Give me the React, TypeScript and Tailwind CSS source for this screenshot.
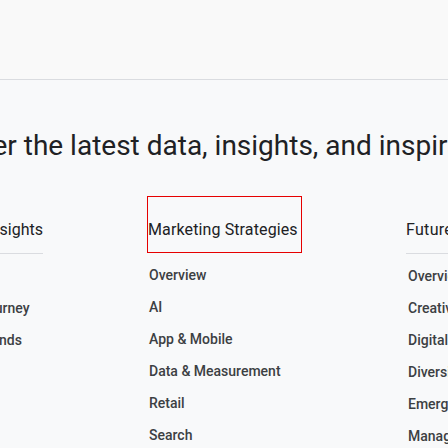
import React from 'react';

const columns = [
  {
    title: 'Consumer Insights',
    items: ['Overview', 'Consumer Journey', 'Consumer Trends'],
  },
  {
    title: 'Marketing Strategies',
    active: true,
    items: ['Overview', 'AI', 'App & Mobile', 'Data & Measurement', 'Retail', 'Search'],
  },
  {
    title: 'Future of Marketing',
    items: ['Overview', 'Creativity', 'Digital Transformation', 'Diversity & Inclusion', 'Emerging Technology', 'Management & Culture'],
  },
];

export default function App() {
  return (
    <div
      className="h-screen w-full overflow-hidden bg-[#f8f9fa] text-[#202124]"
      style={{ fontFamily: 'Roboto, "Liberation Sans", sans-serif' }}
    >
      {/* top bar */}
      <div className="h-[80px] border-b border-[#dadce0] bg-[#f9f9f9]" />

      {/* headline, wider than the viewport */}
      <h1 className="mt-12 -ml-[91px] whitespace-nowrap text-[28px] leading-9 font-normal">
        Discover the latest data, insights, and inspiration
      </h1>

      {/* mega menu columns */}
      <div className="mt-8 flex gap-[104px]">
        {columns.map((col, i) => {
          const body = (
            <div className={col.active ? 'flex w-[155px] shrink-0 flex-col' : 'flex shrink-0 flex-col'}>
              <div
                className={
                  col.active
                    ? 'border border-[#e60000] pt-[21px] pb-[10px] text-[16px] leading-6 whitespace-nowrap tracking-[0.12px]'
                    : i === 2
                      ? 'border-b border-[#dadce0] pt-[22px] pb-[11px] text-[16px] leading-6 whitespace-nowrap tracking-[0.3px]'
                      : 'border-b border-[#dadce0] pt-[22px] pb-[11px] text-[16px] leading-6 whitespace-nowrap'
                }
              >
                {col.title}
              </div>
              <ul className="flex flex-col gap-3 pt-3 pl-[2px]">
                {col.items.map((it) => (
                  <li key={it} className="text-[14px] leading-5 font-medium text-[#3c4043] whitespace-nowrap">
                    {it}
                  </li>
                ))}
              </ul>
            </div>
          );
          // first column is cut off on the left: pin its right edge
          return i === 0 ? (
            <div key={col.title} className="flex w-[43px] shrink-0 justify-end">
              {body}
            </div>
          ) : (
            <React.Fragment key={col.title}>{body}</React.Fragment>
          );
        })}
      </div>
    </div>
  );
}
